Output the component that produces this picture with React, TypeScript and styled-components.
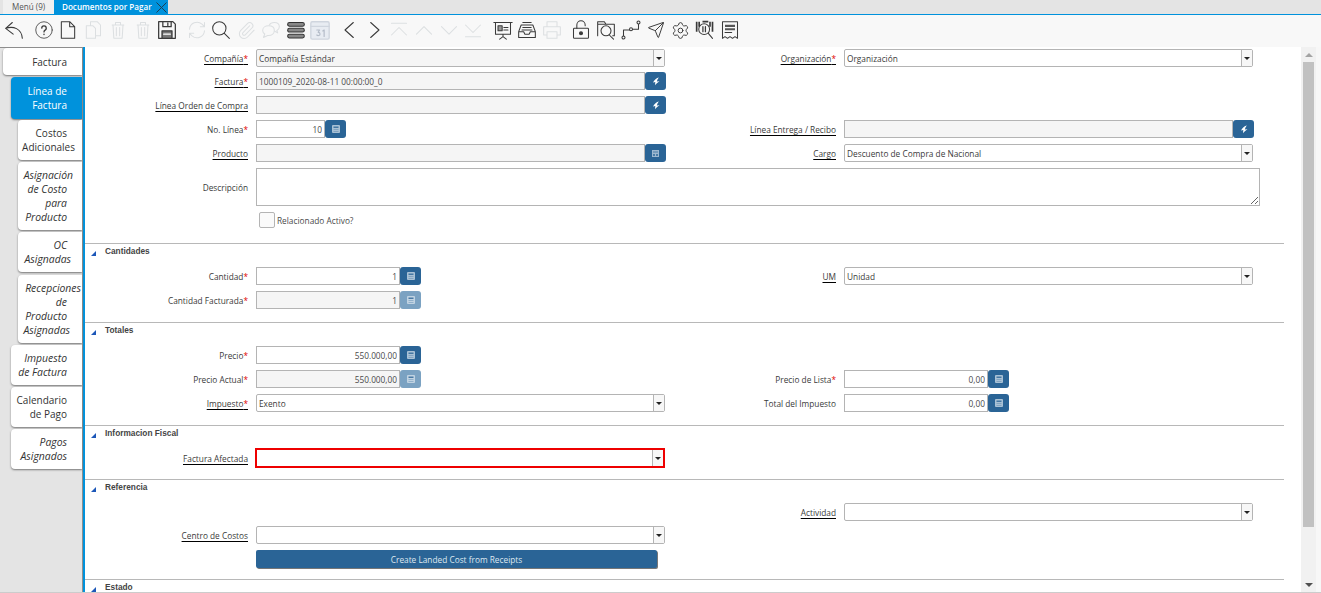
import React from 'react';
import styled, { createGlobalStyle } from 'styled-components';
import { Paperclip, Send, Settings } from 'lucide-react';

const GlobalStyle = createGlobalStyle`
    html, body {
        margin: 0;
        padding: 0;
        height: 100%;
        overflow: hidden;
        background: #fff;
        font-family: "Open Sans", "Liberation Sans", sans-serif;
    }
    * {
        box-sizing: border-box;
    }
`;

const Page = styled.div`
    width: 1321px;
    height: 593px;
    display: flex;
    flex-direction: column;
    overflow: hidden;
`;

/* top tabs */
const TabBar = styled.div`
    height: 15px;
    flex: none;
    display: flex;
    padding-left: 3px;
    background: #e4e4e4;
    border-bottom: 1px solid #0092dc;
`;

const MenuTab = styled.div`
    width: 51px;
    padding-left: 9px;
    background: #f0f0f0;
    color: #555;
    font-size: 8.1px;
    line-height: 14px;
    white-space: nowrap;
`;

const OpenTab = styled.div`
    width: 114px;
    display: flex;
    align-items: center;
    justify-content: space-between;
    padding: 0 0 0 8px;
    background: #0092dc;
    color: #fff;
    font-size: 8.1px;
    font-weight: 600;
    line-height: 14px;
    white-space: nowrap;
`;

/* toolbar */
const Toolbar = styled.div`
    height: 32px;
    flex: none;
    display: flex;
    align-items: flex-start;
    padding: 3px 0 0 2px;
    background: #f8f8f8;
`;

const ToolButton = styled.div<{ $gap?: boolean; $off?: boolean }>`
    width: 24.75px;
    height: 24px;
    margin-left: ${(p) => (p.$gap ? '4.5px' : '0')};
    display: flex;
    align-items: center;
    justify-content: center;
    color: ${(p) => (p.$off ? '#dcdfe1' : '#3a3a3a')};
`;

const Svg: React.FC<{ children: React.ReactNode; size?: number; weight?: number }> = ({ children, size = 20, weight = 1.25 }) => (
    <svg
        width={size}
        height={size}
        viewBox="0 0 24 24"
        fill="none"
        stroke="currentColor"
        strokeWidth={weight}
        strokeLinecap="round"
        strokeLinejoin="round"
    >
        {children}
    </svg>
);

const toolIcons: { gap?: boolean; off?: boolean; icon: React.ReactNode }[] = [
    { icon: <Svg><path d="M2 10L10 3M2 10l9 7M2 10c9-3 19 0 20 12" /></Svg> },
    { gap: true, icon: <Svg size={18}><circle cx="12" cy="12" r="11" stroke="#555" /><path d="M9 9.500a3 3 0 1 1 4.500 2.600c-1 .6-1.500 1.200-1.500 2.400M12 17.500v.5" strokeWidth={1.800} /></Svg> },
    { icon: <Svg><path d="M4 2h10l6 6v14H4zM14 2v6h6" /></Svg> },
    { off: true, icon: <Svg><path d="M9 6V2h8l4 4v13h-5M4 7h8l3 3v12H4z" /></Svg> },
    { off: true, icon: <Svg><path d="M5 6h14M9 6V3h6v3M6 6l1 16h10l1-16M10 9v10M14 9v10" /></Svg> },
    { off: true, icon: <Svg><path d="M5 6h14M9 6V3h6v3M6 6l1 16h10l1-16M10 9v10M14 9v10" /></Svg> },
    { icon: <Svg weight={1.500}><path d="M2 2h17l3 3v17H2zM7 2v6h10V2" /><path d="M6 22v-9h12v9z" fill="#777" /><path d="M13 3.500v3" /><path d="M8 17h8" stroke="#fff" /></Svg> },
    { gap: true, off: true, icon: <Svg><path d="M3 11a9 9 0 0 1 15-6l3 3M21 3v5h-5M21 13a9 9 0 0 1-15 6l-3-3M3 21v-5h5" /></Svg> },
    { icon: <Svg><circle cx="10" cy="10" r="8" /><path d="M16 16l6 6" /></Svg> },
    { off: true, icon: <Paperclip size={19} strokeWidth={1.300} /> },
    { off: true, icon: <Svg><path d="M10 6c1-2 3.500-3 6-3 3.500 0 6 2 6 5 0 2-1 3.500-3 4.500l1 3-3.500-2" /><path d="M9 7c-4 0-7 2.200-7 5.500 0 1.800 1 3.300 2.500 4.300L3 21l5-2.500h1c4 0 7-2.500 7-6S13 7 9 7z" /></Svg> },
    { icon: <Svg><g stroke="#333"><rect x="2" y="3" width="20" height="4.500" rx="2.200" fill="#888" /><rect x="2" y="10" width="20" height="4.500" rx="2.200" fill="#888" /><rect x="2" y="17" width="20" height="4.500" rx="2.200" fill="#888" /></g></Svg> },
    { off: true, icon: <Svg size={22}><rect x="2" y="3" width="20" height="19" rx="1.500" fill="#e8ecf2" stroke="#cfd5de" strokeWidth={1.500} /><path d="M2 8h20" stroke="#cfd5de" /><path d="M8.500 12h3l-1.500 2.500c1.500 0 2 .8 2 1.800 0 2-2.500 2.200-3.500 1.200M15 13l1.500-1v7" stroke="#b4bcc8" strokeWidth={1.300} /></Svg> },
    { gap: true, icon: <Svg><path d="M16 3L6 12l10 9" /></Svg> },
    { icon: <Svg><path d="M8 3l10 9-10 9" /></Svg> },
    { off: true, icon: <Svg><path d="M3 18L12 9l9 9M3 4h18" /></Svg> },
    { off: true, icon: <Svg><path d="M3 17l9-9 9 9" /></Svg> },
    { off: true, icon: <Svg><path d="M3 8l9 9 9-9" /></Svg> },
    { off: true, icon: <Svg><path d="M3 6l9 9 9-9M3 20h18" /></Svg> },
    { gap: true, icon: <Svg><path d="M1 3h22M3 3v14h18V3M12 17v3M8 23l4-3 4 3" /><rect x="6" y="7" width="5" height="6" fill="#999" /><path d="M13 9h5M13 12h5" /></Svg> },
    { icon: <Svg><path d="M2 14l3-8h14l3 8v7H2zM2 14h6l1.500 3h5l1.500-3h6M7 3h10M7 9h10M6 12h12" /></Svg> },
    { off: true, icon: <Svg><path d="M6 8V2h12v6M6 18H2V8h20v10h-4M6 14h12v8H6z" /></Svg> },
    { gap: true, icon: <Svg><rect x="3" y="10" width="18" height="12" rx="1" /><path d="M7 10V6a5 5 0 0 1 10 0v1" /><circle cx="12" cy="16" r="1.800" fill="currentColor" /></Svg> },
    { icon: <Svg><path d="M2 19V2h8l2 3h10v14h-2M2 5h10" /><circle cx="12" cy="13" r="6" /><path d="M16 18l5 5" /></Svg> },
    { icon: <Svg><circle cx="3" cy="21" r="1.800" /><circle cx="12" cy="11" r="1.800" /><circle cx="21" cy="3" r="1.800" /><path d="M3 19v-7h7M14 11h7V5" /></Svg> },
    { icon: <Send size={18} strokeWidth={1.300} /> },
    { icon: <Settings size={19} strokeWidth={1.200} /> },
    { icon: <Svg><g strokeLinecap="butt" strokeWidth={2}><path d="M2 2v12M5 2v6M18 2v6M21 2v12M9 2h7" /></g><circle cx="11" cy="11" r="6.500" /><path d="M9.500 8v6M12.500 8v6" strokeWidth={1.500} /><path d="M16 16l5 6" /></Svg> },
    { icon: <Svg><path d="M3 2h18v20l-3-2-3 2-3-2-3 2-3-2-3 2z" /><g stroke="#555" strokeWidth={2.500} strokeLinecap="butt"><path d="M6 7h12M6 11h12" /></g><path d="M6 15h8" /></Svg> },
];

/* main area */
const Main = styled.div`
    flex: 1;
    min-height: 0;
    display: flex;
    border-bottom: 1px solid #ccc;
`;

const Sidebar = styled.div`
    width: 85px;
    flex: none;
    display: flex;
    flex-direction: column;
    align-items: flex-end;
    padding: 1px 1px 0 0;
    background: #e4e4e4;
    border-right: 2px solid #0092dc;
    box-shadow: inset 0 1px 0 #8f8f8f, inset -1px 0 0 #8f8f8f;
`;

const SideTab = styled.div<{ $left: number; $active?: boolean; $italic?: boolean; $height: number; $top: number }>`
    width: ${(p) => 79 - p.$left}px;
    height: ${(p) => p.$height}px;
    margin-top: ${(p) => p.$top}px;
    flex: none;
    display: flex;
    flex-direction: column;
    justify-content: center;
    align-items: flex-end;
    padding-right: 15px;
    border-radius: 4px 0 0 4px;
    background: ${(p) => (p.$active ? '#0092dc' : '#fff')};
    color: ${(p) => (p.$active ? '#fff' : '#333')};
    font-size: ${(p) => (p.$italic ? '10.4px' : '10px')};
    font-style: ${(p) => (p.$italic ? 'italic' : 'normal')};
    line-height: 14px;
    white-space: nowrap;
    box-shadow: 0 1px 2px #777;
`;

const TabLine = styled.span<{ $over?: number }>`
    margin-right: ${(p) => -(p.$over || 0)}px;
`;

const Content = styled.div`
    flex: 1;
    min-width: 0;
    overflow: hidden;
`;

const Section = styled.div<{ $first?: boolean; $bottom: number }>`
    width: 1199px;
    padding-top: ${(p) => (p.$first ? '2px' : '0')};
    padding-bottom: ${(p) => p.$bottom}px;
    border-top: ${(p) => (p.$first ? 'none' : '1px solid #b8b8b8')};
`;

const SectionTitle = styled.div`
    height: 15px;
    margin-bottom: 8px;
    display: flex;
    align-items: center;
    padding: 0 0 2px 6px;
    gap: 9px;
    color: #444;
    font-family: "Liberation Sans", Arial, sans-serif;
    font-size: 8.3px;
    font-weight: 700;
`;

const Corner = styled.span`
    width: 0;
    height: 0;
    margin-top: 6px;
    border-style: solid;
    border-width: 0 0 5px 5px;
    border-color: transparent transparent #1c57b8 transparent;
`;

const Row = styled.div<{ $gap?: number; $height?: number }>`
    height: ${(p) => p.$height || 18}px;
    margin-bottom: ${(p) => (p.$gap === undefined ? 6 : p.$gap)}px;
    display: flex;
`;

const LeftCell = styled.div`
    width: 580px;
    flex: none;
    display: flex;
`;

const RightCell = styled.div`
    width: 590px;
    flex: none;
    display: flex;
`;

const Label = styled.label<{ $wide?: boolean; $link?: boolean }>`
    width: ${(p) => (p.$wide ? 171 : 163)}px;
    margin-right: 8px;
    flex: none;
    align-self: center;
    text-align: right;
    color: #3a3a3a;
    font-size: 8.3px;
    white-space: nowrap;
    text-decoration: ${(p) => (p.$link ? 'underline' : 'none')};
    text-decoration-color: #000;
    text-underline-offset: 2px;
`;

const Required = styled.span`
    color: #e00000;
`;

const TextField = styled.input<{ $width: number; $right?: boolean; $muted?: boolean }>`
    width: ${(p) => p.$width}px;
    height: 18px;
    flex: none;
    padding: 0 2px;
    border: 1px solid #b4b4b4;
    border-radius: 0;
    outline: none;
    background: ${(p) => (p.$muted ? '#f5f5f5' : '#fff')};
    color: #4a4a4a;
    font-family: inherit;
    font-size: 8.3px;
    text-align: ${(p) => (p.$right ? 'right' : 'left')};
`;

const SquareButton = styled.div<{ $dim?: boolean }>`
    width: 21px;
    height: 18px;
    flex: none;
    display: flex;
    align-items: center;
    justify-content: center;
    border-radius: 3px;
    background: ${(p) => (p.$dim ? '#7ba2c2' : '#2a6496')};
    color: #dfe8f0;
`;

const SelectBox = styled.div<{ $muted?: boolean; $error?: boolean }>`
    width: ${(p) => (p.$error ? 410 : 409)}px;
    height: ${(p) => (p.$error ? 20 : 18)}px;
    margin: ${(p) => (p.$error ? '-1px 0 0 -1px' : '0')};
    flex: none;
    display: flex;
    align-items: center;
    border: ${(p) => (p.$error ? '2px solid #ee0000' : '1px solid #b4b4b4')};
    border-radius: ${(p) => (p.$error ? '0' : '2px')};
    background: ${(p) => (p.$muted ? '#f5f5f5' : '#fff')};
    color: #3a3a3a;
    font-size: 8.3px;
`;

const SelectText = styled.span`
    flex: 1;
    padding-left: 2px;
`;

const SelectArrow = styled.span`
    width: 11px;
    height: 100%;
    display: flex;
    align-items: center;
    justify-content: center;
    background: #f7f7f7;
    border-left: 1px solid #b4b4b4;

    &::after {
        content: '';
        border-style: solid;
        border-width: 3px 3px 0 3px;
        border-color: #222 transparent transparent transparent;
    }
`;

const Notes = styled.textarea`
    width: 1004px;
    height: 38px;
    display: block;
    border: 1px solid #b4b4b4;
    border-radius: 0;
    outline: none;
    background: #fff;
`;

const CheckRow = styled.div`
    display: flex;
    align-items: center;
    gap: 2px;
    margin-left: 174px;
    color: #4a4a4a;
    font-size: 8.3px;
`;

const CheckBox = styled.span`
    width: 16px;
    height: 16px;
    border: 1px solid #b4b4b4;
    border-radius: 2px;
    background: #fafafa;
`;

const WideButton = styled.div`
    width: 401px;
    height: 18px;
    margin-left: 171px;
    display: flex;
    align-items: center;
    justify-content: center;
    border-radius: 2px;
    background: #2a6496;
    color: #dfe8f0;
    font-size: 8.3px;
    box-shadow: 1px 1px 0 #777;
`;

/* scrollbar */
const ScrollTrack = styled.div`
    width: 20px;
    flex: none;
    margin-left: -1px;
    display: flex;
    flex-direction: column;
    align-items: flex-start;
    background: #f1f1f1;
    padding: 0 0 0 2px;
    border-right: 5px solid #f7f7f7;
`;

const ScrollArrow = styled.span<{ $up?: boolean }>`
    width: 11px;
    height: 15px;
    flex: none;
    display: flex;
    align-items: center;
    justify-content: center;

    &::after {
        content: '';
        border-style: solid;
        border-width: ${(p) => (p.$up ? '0 4px 4px 4px' : '4px 4px 0 4px')};
        border-color: ${(p) =>
            p.$up ? 'transparent transparent #a3a3a3 transparent' : '#505050 transparent transparent transparent'};
    }
`;

const ScrollThumb = styled.div`
    width: 11px;
    height: 465px;
    background: #c1c1c1;
`;

const ScrollSpace = styled.div`
    flex: 1;
`;

const Calculator = () => (
    <svg width="8" height="8" viewBox="0 0 8 8">
        <rect width="8" height="8" rx="1" fill="currentColor" opacity="0.7" />
        <path d="M1.500 1.500h5v1.500h-5z" fill="#2a6496" opacity="0.8" />
        <path d="M1.500 4.500h5v.6h-5zM1.500 6h5v.6h-5z" fill="#2a6496" opacity="0.6" />
    </svg>
);

const Bolt = () => (
    <svg width="8" height="9" viewBox="0 0 8 9">
        <path d="M7 0.500C4.500 1 2.200 2.800 1 5.500l2.300-.4-.3 3.200C4 6.800 5.500 5.500 7.500 4.300l-2.700.3C5.200 3 6 1.500 7 0.500z" fill="#fff" />
    </svg>
);

const Product = () => (
    <svg width="7" height="7" viewBox="0 0 7 7">
        <path d="M0 0h7v7H0z" fill="#9db8d0" />
        <path d="M1 1.500h5v1H1zM1 4h2v2H1zM4 4h2v2H4z" fill="#4a7ca6" />
    </svg>
);

const CloseX = () => (
    <svg width="11" height="11" viewBox="0 0 11 11" stroke="#1d3f55" strokeWidth="1" style={{ marginRight: 1 }}>
        <path d="M0.500 0.500l10 10M10.500 0.500l-10 10" />
    </svg>
);

const Name: React.FC<{ text: string; req?: boolean; link?: boolean; wide?: boolean }> = ({ text, req, link, wide }) => (
    <Label $link={link} $wide={wide}>
        {text}
        {req && <Required>*</Required>}
    </Label>
);

const Select: React.FC<{ value?: string; muted?: boolean; error?: boolean }> = ({ value, muted, error }) => (
    <SelectBox $muted={muted} $error={error}>
        <SelectText>{value}</SelectText>
        <SelectArrow />
    </SelectBox>
);

const sideTabs = [
    { left: 0, top: 0, height: 27, lines: [['Factura']] },
    { left: 8, top: 2, height: 42, active: true, lines: [['Línea de'], ['Factura']] },
    { left: 15, top: 1, height: 40, lines: [['Costos'], ['Adicionales', 8]] },
    { left: 15, top: 2, height: 68, italic: true, lines: [['Asignación', 6], ['de Costo'], ['para'], ['Producto']] },
    { left: 15, top: 2, height: 40, italic: true, lines: [['OC'], ['Asignadas', 4]] },
    { left: 15, top: 3, height: 68, italic: true, lines: [['Recepciones', 14], ['de'], ['Producto'], ['Asignadas', 3]] },
    { left: 8, top: 2, height: 40, italic: true, lines: [['Impuesto'], ['de Factura']] },
    { left: 8, top: 2, height: 40, lines: [['Calendario'], ['de Pago']] },
    { left: 8, top: 2, height: 40, italic: true, lines: [['Pagos'], ['Asignados']] },
];

export default function App() {
    return (
        <Page>
            <GlobalStyle />
            <TabBar>
                <MenuTab>Menú (9)</MenuTab>
                <OpenTab>
                    Documentos por Pagar
                    <CloseX />
                </OpenTab>
            </TabBar>
            <Toolbar>
                {toolIcons.map((t, i) => (
                    <ToolButton key={i} $gap={t.gap} $off={t.off}>
                        {t.icon}
                    </ToolButton>
                ))}
            </Toolbar>
            <Main>
                <Sidebar>
                    {sideTabs.map((t, i) => (
                        <SideTab key={i} $left={t.left} $top={t.top} $height={t.height} $active={t.active} $italic={t.italic}>
                            {t.lines.map((l, j) => (
                                <TabLine key={j} $over={l[1] as number | undefined}>
                                    {l[0]}
                                </TabLine>
                            ))}
                        </SideTab>
                    ))}
                </Sidebar>
                <Content>
                    <Section $first $bottom={15}>
                        <Row $gap={5}>
                            <LeftCell>
                                <Name text="Compañía" req link />
                                <Select value="Compañía Estándar" muted />
                            </LeftCell>
                            <RightCell>
                                <Name text="Organización" req link wide />
                                <Select value="Organización" />
                            </RightCell>
                        </Row>
                        <Row>
                            <LeftCell>
                                <Name text="Factura" req link />
                                <TextField $width={389} $muted readOnly value="1000109_2020-08-11 00:00:00_0" />
                                <SquareButton><Bolt /></SquareButton>
                            </LeftCell>
                        </Row>
                        <Row>
                            <LeftCell>
                                <Name text="Línea Orden de Compra" link />
                                <TextField $width={389} $muted readOnly value="" />
                                <SquareButton><Bolt /></SquareButton>
                            </LeftCell>
                        </Row>
                        <Row>
                            <LeftCell>
                                <Name text="No. Línea" req />
                                <TextField $width={69} $right readOnly value="10" />
                                <SquareButton><Calculator /></SquareButton>
                            </LeftCell>
                            <RightCell>
                                <Name text="Línea Entrega / Recibo" link wide />
                                <TextField $width={389} $muted readOnly value="" />
                                <SquareButton><Bolt /></SquareButton>
                            </RightCell>
                        </Row>
                        <Row>
                            <LeftCell>
                                <Name text="Producto" link />
                                <TextField $width={389} $muted readOnly value="" />
                                <SquareButton><Product /></SquareButton>
                            </LeftCell>
                            <RightCell>
                                <Name text="Cargo" link wide />
                                <Select value="Descuento de Compra de Nacional" />
                            </RightCell>
                        </Row>
                        <Row $height={38}>
                            <Name text="Descripción" />
                            <Notes />
                        </Row>
                        <Row $height={16} $gap={0}>
                            <CheckRow>
                                <CheckBox />
                                Relacionado Activo?
                            </CheckRow>
                        </Row>
                    </Section>

                    <Section $bottom={13}>
                        <SectionTitle><Corner />Cantidades</SectionTitle>
                        <Row>
                            <LeftCell>
                                <Name text="Cantidad" req />
                                <TextField $width={144} $right readOnly value="1" />
                                <SquareButton><Calculator /></SquareButton>
                            </LeftCell>
                            <RightCell>
                                <Name text="UM" link wide />
                                <Select value="Unidad" />
                            </RightCell>
                        </Row>
                        <Row $gap={0}>
                            <LeftCell>
                                <Name text="Cantidad Facturada" req />
                                <TextField $width={144} $right $muted readOnly value="1" />
                                <SquareButton $dim><Calculator /></SquareButton>
                            </LeftCell>
                        </Row>
                    </Section>

                    <Section $bottom={13}>
                        <SectionTitle><Corner />Totales</SectionTitle>
                        <Row>
                            <LeftCell>
                                <Name text="Precio" req />
                                <TextField $width={144} $right readOnly value="550.000,00" />
                                <SquareButton><Calculator /></SquareButton>
                            </LeftCell>
                        </Row>
                        <Row>
                            <LeftCell>
                                <Name text="Precio Actual" req />
                                <TextField $width={144} $right $muted readOnly value="550.000,00" />
                                <SquareButton $dim><Calculator /></SquareButton>
                            </LeftCell>
                            <RightCell>
                                <Name text="Precio de Lista" req wide />
                                <TextField $width={144} $right readOnly value="0,00" />
                                <SquareButton><Calculator /></SquareButton>
                            </RightCell>
                        </Row>
                        <Row $gap={0}>
                            <LeftCell>
                                <Name text="Impuesto" req link />
                                <Select value="Exento" />
                            </LeftCell>
                            <RightCell>
                                <Name text="Total del Impuesto" wide />
                                <TextField $width={144} $right readOnly value="0,00" />
                                <SquareButton><Calculator /></SquareButton>
                            </RightCell>
                        </Row>
                    </Section>

                    <Section $bottom={12}>
                        <SectionTitle><Corner />Informacion Fiscal</SectionTitle>
                        <Row $gap={0}>
                            <LeftCell>
                                <Name text="Factura Afectada" link />
                                <Select error />
                            </LeftCell>
                        </Row>
                    </Section>

                    <Section $bottom={11}>
                        <SectionTitle><Corner />Referencia</SectionTitle>
                        <Row $gap={5}>
                            <LeftCell />
                            <RightCell>
                                <Name text="Actividad" link wide />
                                <Select />
                            </RightCell>
                        </Row>
                        <Row>
                            <LeftCell>
                                <Name text="Centro de Costos" link />
                                <Select />
                            </LeftCell>
                        </Row>
                        <Row $gap={0}>
                            <WideButton>Create Landed Cost from Receipts</WideButton>
                        </Row>
                    </Section>

                    <Section $bottom={0}>
                        <SectionTitle><Corner />Estado</SectionTitle>
                    </Section>
                </Content>
                <ScrollTrack>
                    <ScrollArrow $up />
                    <ScrollThumb />
                    <ScrollSpace />
                    <ScrollArrow />
                </ScrollTrack>
            </Main>
        </Page>
    );
}
